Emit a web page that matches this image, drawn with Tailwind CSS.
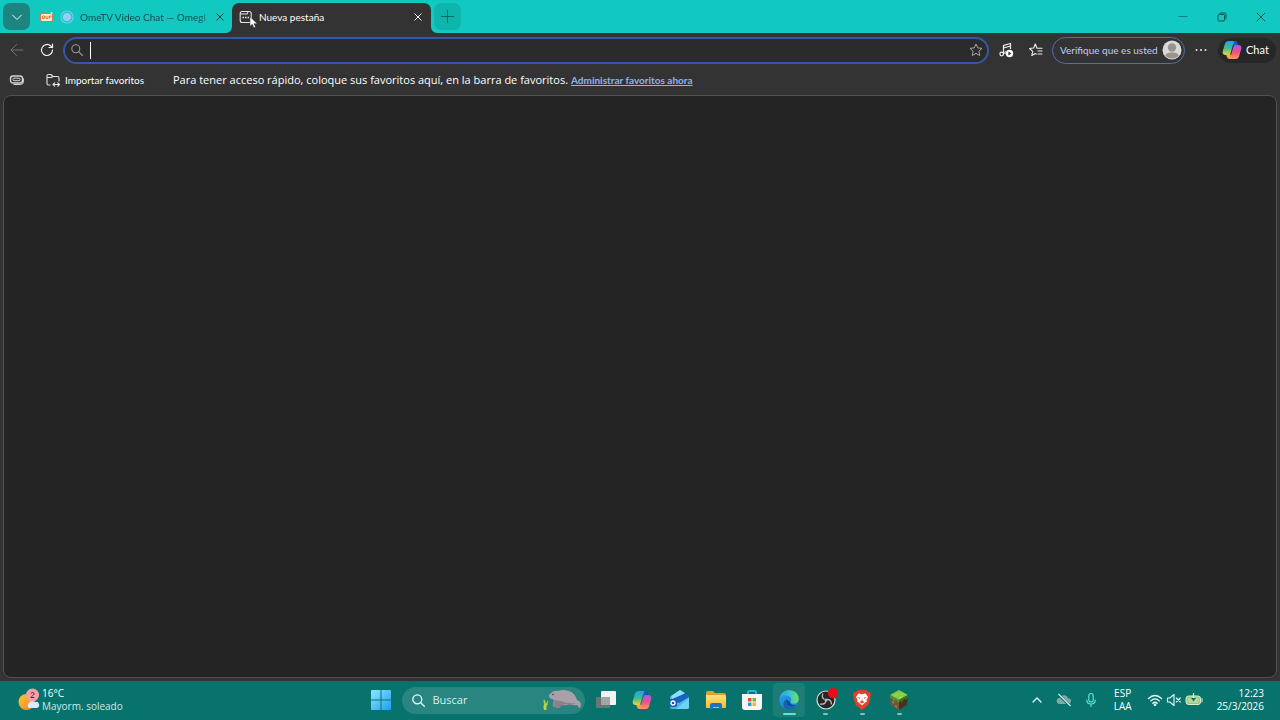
<!DOCTYPE html>
<html lang="es">
<head>
<meta charset="utf-8">
<meta name="viewport" content="width=device-width, initial-scale=1">
<title>Nueva pestaña</title>
<script src="https://cdn.jsdelivr.net/npm/@tailwindcss/browser@4"></script>
</head>
<body class="flex h-screen flex-col overflow-hidden bg-[#333333] font-['Open_Sans','Noto_Sans',sans-serif] text-[11px] text-white">
<svg class="absolute h-0 w-0" aria-hidden="true">
  <defs>
    <linearGradient id="cpA" x1="0" y1="0" x2="0" y2="1"><stop offset="0" stop-color="#2a9df0"/><stop offset=".5" stop-color="#3cbc8e"/><stop offset="1" stop-color="#f0d23c"/></linearGradient>
    <linearGradient id="cpB" x1="0" y1="0" x2="0" y2="1"><stop offset="0" stop-color="#a45be8"/><stop offset=".5" stop-color="#ef4f8c"/><stop offset="1" stop-color="#ff9a52"/></linearGradient>
    <linearGradient id="cpC" x1="0" y1="0" x2="1" y2="0"><stop offset="0" stop-color="#1f8df0"/><stop offset="1" stop-color="#1747b8"/></linearGradient>
    <linearGradient id="win" x1="0" y1="0" x2="1" y2="1"><stop offset="0" stop-color="#8de6ff"/><stop offset="1" stop-color="#1c9ff0"/></linearGradient>
    <linearGradient id="sun" x1="0" y1="0" x2="1" y2="1"><stop offset="0" stop-color="#ffc63a"/><stop offset="1" stop-color="#f0801e"/></linearGradient>
    <linearGradient id="edgeA" x1="0" y1="0" x2="1" y2="0"><stop offset="0" stop-color="#2ba3e0"/><stop offset=".5" stop-color="#36c2d6"/><stop offset="1" stop-color="#6be35c"/></linearGradient>
    <linearGradient id="edgeB" x1="0" y1="0" x2="1" y2="1"><stop offset="0" stop-color="#2ba0ea"/><stop offset="1" stop-color="#1675cc"/></linearGradient>
    <linearGradient id="fold" x1="0" y1="0" x2="0" y2="1"><stop offset="0" stop-color="#ffe07a"/><stop offset="1" stop-color="#f5bd32"/></linearGradient>
    <symbol id="copilot" viewBox="0 0 20 20">
      <path d="M7 1h6q2 0 2.600 2l.9 3h-4z" fill="url(#cpC)"/>
      <path d="M13 19H7.500q-2 0-2.600-2L4 14h4z" fill="#f2a544"/>
      <path d="M6.500 1H12L8.700 13q-.6 2-2.500 2H3Q0 14.500.8 11L3 3.500Q3.800 1 6.500 1z" fill="url(#cpA)"/>
      <path d="M13.800 5H17q3 .5 2.200 4L17 16.500q-.8 2.500-3.500 2.500H8l3.300-12q.6-2 2.500-2z" fill="url(#cpB)"/>
    </symbol>
  </defs>
</svg>

<header class="flex h-[33px] shrink-0 items-end bg-[#11c9c1] pl-[3px] font-['Lato','Open_Sans',sans-serif] text-[10px]">
  <button aria-label="Buscar pestañas" class="mb-[3px] grid h-[27px] w-[27px] place-items-center rounded-[7px] bg-[#1c8580]">
    <svg class="h-3 w-3" viewBox="0 0 12 12" fill="none" stroke="#e8ffff" stroke-linecap="round"><path d="M1.500 4 6 8.500 10.500 4"/></svg>
  </button>
  <div class="flex h-8 w-[202px] items-center pl-[9px] text-[#0b4a4a]">
    <svg class="h-4 w-4 shrink-0" viewBox="0 0 16 16"><path d="M1 4h3L5 2.500 6.500 4H14v9H1z" fill="#d9725c"/><rect x="2" y="5" width="11" height="7" rx="1" fill="#fbe9d2"/><path d="M3.500 7h2v2.500h-2zM7 7v2.500h2V7M10.500 9.500V7h1.500v1.500" fill="none" stroke="#d38058"/><circle cx="12.500" cy="4" r="1" fill="#fff"/></svg>
    <svg class="ml-1 h-4 w-4 shrink-0" viewBox="0 0 16 16"><circle cx="8" cy="8" r="6" fill="none" stroke="#6fc7f7" stroke-width="1.200"/><circle cx="8" cy="8" r="4.300" fill="#95ccf5"/></svg>
    <span class="ml-[5px] w-[132px] overflow-hidden mask-r-from-90% whitespace-nowrap">OmeTV Video Chat — Omegl</span>
    <button aria-label="Cerrar pestaña" class="grid h-4 w-4 shrink-0 place-items-center"><svg class="h-2 w-2" viewBox="0 0 8 8" stroke="#083c3c"><path d="M.5.5l7 7M7.500.5l-7 7"/></svg></button>
  </div>
  <div class="relative flex h-[30px] w-[199px] items-center rounded-t-[7px] bg-[#333333] pb-0.5 pl-[7px]">
    <svg class="absolute bottom-0 -left-1.5 h-1.5 w-1.5" viewBox="0 0 6 6"><path d="M6 0v6H0a6 6 0 0 0 6-6z" fill="#333333"/></svg>
    <svg class="absolute -right-1.5 bottom-0 h-1.5 w-1.5" viewBox="0 0 6 6"><path d="M0 0v6h6a6 6 0 0 1-6-6z" fill="#333333"/></svg>
    <svg class="h-3.5 w-3.5" viewBox="0 0 14 14" fill="none" stroke="#e6e6e6" stroke-width="1.100"><rect x="1.200" y="1.500" width="11" height="11" rx="2"/><path d="M1.500 4H8l1-2"/><path d="M3.500 7.500h7.500" stroke-width="1.500" stroke-dasharray="1.500 1"/></svg>
    <span class="ml-1.5 flex-1">Nueva pestaña</span>
    <button aria-label="Cerrar pestaña" class="mr-[5px] grid h-4 w-4 place-items-center"><svg class="h-2 w-2" viewBox="0 0 8 8" stroke="#f4f4f4"><path d="M.5.5l7 7M7.500.5l-7 7"/></svg></button>
    <svg class="absolute top-[13px] left-[17px] h-[13px] w-2.5" viewBox="0 0 10 13"><path d="M1 .8v9.500l2.300-2 1.600 3.500 1.700-.8L5 7.700h3.300z" fill="#fff" stroke="#333" stroke-width=".5"/></svg>
  </div>
  <button aria-label="Nueva pestaña" class="mb-[3px] ml-[3px] grid h-[27px] w-[27px] place-items-center rounded-[7px] bg-[#0eb5ad]">
    <svg class="h-[13px] w-[13px]" viewBox="0 0 13 13" stroke="#076661"><path d="M6.500 0v13M0 6.500h13"/></svg>
  </button>
  <div class="ml-auto flex h-[33px]">
    <button aria-label="Minimizar" class="grid w-[39px] place-items-center"><svg class="h-2.5 w-2.5" viewBox="0 0 10 10" stroke="#087d78"><path d="M.5 4.500h9"/></svg></button>
    <button aria-label="Restaurar" class="grid w-[39px] place-items-center"><svg class="h-2.5 w-2.5" viewBox="0 0 10 10" fill="none" stroke="#0b5350"><rect x="1" y="2.500" width="6.500" height="6.500" rx="1.200"/><path d="M3 2V1.500Q3 1 4 1h3.500Q9 1 9 2.500V6q0 1-1 1.300"/></svg></button>
    <button aria-label="Cerrar" class="grid w-[39px] place-items-center"><svg class="h-2.5 w-2.5" viewBox="0 0 10 10" stroke="#0b5350"><path d="M.8.8l8.400 8.400M9.200.8.8 9.200"/></svg></button>
  </div>
</header>

<nav class="flex h-[33px] shrink-0 items-center pt-px pr-1 pl-2 font-['Lato','Open_Sans',sans-serif]" aria-label="Barra de herramientas">
  <button aria-label="Atrás" class="grid h-[18px] w-[18px] place-items-center"><svg class="h-3.5 w-3.5" viewBox="0 0 14 14" fill="none" stroke="#707070" stroke-linecap="round"><path d="M13 7H1M6.500 1.500 1 7l5.500 5.500"/></svg></button>
  <button aria-label="Actualizar" class="ml-3 grid h-[18px] w-[18px] place-items-center"><svg class="h-3.5 w-3.5" viewBox="0 0 14 14" fill="none" stroke="#f2f2f2" stroke-width="1.200" stroke-linecap="round"><path d="M12.500 7A5.500 5.500 0 1 1 10.800 3L12.500 4.500"/><path d="M12.500 1v3.500H9"/></svg></button>
  <div class="ml-[7px] flex h-[27px] flex-1 items-center rounded-full border-2 border-[#3458a9] bg-[#2b2b2b] px-1.5">
    <svg class="h-3 w-3 shrink-0" viewBox="0 0 12 12" fill="none" stroke="#989898" stroke-width="1.100" stroke-linecap="round"><circle cx="4.800" cy="4.800" r="4"/><path d="M7.800 7.800l3.700 3.700"/></svg>
    <span class="ml-[7px] h-[17px] w-px shrink-0 bg-white" aria-hidden="true"></span>
    <input type="text" aria-label="Barra de direcciones y búsqueda" class="min-w-0 flex-1 bg-transparent px-1 outline-none">
    <button aria-label="Agregar a favoritos" class="-mr-0.5"><svg class="h-3.5 w-3.5" viewBox="0 0 14 14" fill="none" stroke="#a8a8a8" stroke-linejoin="round"><path d="M7 1l1.800 3.900 4.200.5-3.100 2.900.8 4.200L7 10.400l-3.700 2.100.8-4.200L1 5.400l4.200-.5z"/></svg></button>
  </div>
  <button aria-label="Música" class="ml-[9px]"><svg class="h-4 w-4" viewBox="0 0 16 16"><g fill="none" stroke="#eee" stroke-width="1.200"><path d="M5.500 12V3.500L12.500 1.500V7M5.500 6l7-2"/><circle cx="3.700" cy="12" r="1.800"/><path d="M7.700 9.500a1.500 1.500 0 0 0-.3 2.500"/></g><circle cx="11.500" cy="11.500" r="3.700" fill="#fff"/><path d="M10.400 9.600v3.800l3-1.900z" fill="#333"/></svg></button>
  <button aria-label="Favoritos" class="ml-3.5"><svg class="h-4 w-4" viewBox="0 0 16 16" fill="none" stroke="#eee" stroke-width="1.100" stroke-linejoin="round" stroke-linecap="round"><path d="M9 6.200 7.300 2 5.700 6 1.500 6.500 4.700 9.300 3.800 13.500l3.500-2 1 .6M9 6.200h5M10 9h4M10 12h4"/></svg></button>
  <button class="ml-2 flex h-[27px] w-[133px] items-center justify-between rounded-full border border-[#536eae] pr-0.5 pl-[7px] text-[10px] whitespace-nowrap text-[#c1cdf8]">Verifique que es usted
    <svg class="h-5 w-5 shrink-0" viewBox="0 0 20 20"><circle cx="10" cy="10" r="9.500" fill="#dad9d6"/><circle cx="10" cy="7.500" r="4.200" fill="#979490"/><path d="M3.500 16c0-3 3-3.500 6.500-3.500s6.500.5 6.500 3.500a9.500 9.500 0 0 1-13 0z" fill="#979490"/></svg>
  </button>
  <button aria-label="Configuración y más" class="ml-2.5"><svg class="h-3 w-3" viewBox="0 0 12 12" fill="#e6e6e6"><circle cx="1.500" cy="6" r="1"/><circle cx="6" cy="6" r="1"/><circle cx="10.500" cy="6" r="1"/></svg></button>
  <button class="ml-[11px] flex h-[25px] w-[58px] items-center gap-1 rounded-full bg-[#272727] pl-1"><svg class="h-5 w-5 shrink-0"><use href="#copilot"/></svg><span>Chat</span></button>
</nav>

<div class="flex h-[29px] shrink-0 items-center pb-px pl-[9px]">
  <button aria-label="Área de trabajo"><svg class="h-4 w-4" viewBox="0 0 16 16" fill="none" stroke="#d4d4d4"><rect x="1.500" y="4" width="12" height="7" rx="2.500" stroke-width="1.400"/><rect x="4" y="6.200" width="7" height="2.500" rx="1"/><path d="M14.500 6.500v3q0 3-3 3H4.500"/></svg></button>
  <button class="ml-5 flex w-[100px] items-center gap-1 font-['Lato','Open_Sans',sans-serif] text-[10px] whitespace-nowrap"><svg class="h-4 w-4 shrink-0" viewBox="0 0 16 16" fill="none" stroke="#e2e2e2" stroke-width="1.100" stroke-linecap="round" stroke-linejoin="round"><path d="M5 13H3.500Q2 13 2 11.500V4Q2 2.500 3.500 2.500H6L8 4.500H12.500Q14 4.500 14 6v3M2.500 5.500H6L8 4.500M8 12.500h6.500M9.700 10.800 8 12.500l1.700 1.700M12.800 10.800l1.700 1.700-1.700 1.700"/></svg>Importar favoritos</button>
  <p class="ml-7 whitespace-nowrap">Para tener acceso rápido, coloque sus favoritos aquí, en la barra de favoritos.</p>
  <a href="#" class="ml-[3px] font-['Lato','Open_Sans',sans-serif] text-[10px] font-bold whitespace-nowrap text-[#94b1ed] underline">Administrar favoritos ahora</a>
</div>

<main class="mx-[3px] mb-[3px] flex-1 rounded-lg border border-[#505050] bg-[#242424]"></main>

<footer class="grid h-[39px] shrink-0 grid-cols-[1fr_auto_1fr] items-center bg-[#08736c] pb-px text-[10px]">
  <button class="flex items-center gap-0.5 pl-[18px] text-left leading-[13px]">
    <svg class="h-6 w-[22px]" viewBox="0 0 22 24"><circle cx="8.500" cy="14" r="8" fill="url(#sun)"/><path d="M11 20a3 3 0 0 1 0-5 4 4 0 0 1 6-1 3 3 0 0 1 2 6z" fill="#d8e9fa"/><circle cx="14.500" cy="7" r="6.500" fill="#f3a0a8"/><path d="M12.800 5.500q1.500-2 3-.5c1 1.500-1.500 2.500-3 4.500h3.500" fill="none" stroke="#5d1f2c"/></svg>
    <span><span class="block">16°C</span><span class="block text-[#cdeae7]">Mayorm. soleado</span></span>
  </button>
  <div class="flex items-center gap-[3px]">
    <button aria-label="Inicio" class="grid h-9 w-9 place-items-center"><svg class="h-5 w-5" viewBox="0 0 20 20" fill="url(#win)"><path d="M0 1q0-1 1-1h8.500v9.500H0zM10.500 0H19q1 0 1 1v8.500h-9.500zM0 10.500h9.500V20H1q-1 0-1-1zM10.500 10.500H20V19q0 1-1 1h-8.500z"/></svg></button>
    <label class="flex h-[27px] w-[183px] items-center rounded-full bg-[#298580] pr-1 pl-2.5">
      <svg class="h-[13px] w-[13px] shrink-0" viewBox="0 0 13 13" fill="none" stroke="#e4ffff" stroke-width="1.300" stroke-linecap="round"><circle cx="5.300" cy="5.300" r="4.500"/><path d="M8.700 8.700l3.600 3.600"/></svg>
      <input type="text" placeholder="Buscar" aria-label="Buscar" class="ml-2 w-0 min-w-0 flex-1 bg-transparent text-[11px] outline-none placeholder:text-[#d9efed]">
      <svg class="h-[22px] w-[38px] shrink-0" viewBox="0 0 38 22"><path d="M8 4Q11 1 15 2q5-2 11 0 6 2 8 9 3 1 4 4 0 3-2 4-1-2-2-3-4 1-7-1-5 2-9 1l-1 2q-3 2-4 0l-2 0q-2-1-1-3l1-4Q5 9 6 6z" fill="#aaa0a9"/><path d="M6 7q1 4 5 4l7 1q7 3 16 2-6 3-11 1-3 1-5 1l-1 2q-3 2-4 0-3 1-3-2l2-5Q6 10 6 7z" fill="#8b808e"/><circle cx="10" cy="5.500" r=".8" fill="#3c3540"/><path d="M1 21q-1-4 0-6-1-3 0-5 2 3 1.500 5Q4 14 4.500 11q1 4-1 6v4z" fill="#b2d940"/></svg>
    </label>
    <div class="grid w-[330px] grid-cols-9 place-items-center">
      <button aria-label="Vista de tareas" class="grid h-9 w-full place-items-center"><svg class="h-[22px] w-[22px]" viewBox="0 0 22 22"><rect x="6" y="2" width="15" height="14" rx="1" fill="#f2f2f2"/><rect x="1" y="8" width="14" height="11" rx="1" fill="#6b7573"/><rect x="6" y="8" width="9" height="8" fill="#a5a5a5"/></svg></button>
      <button aria-label="Copilot" class="grid h-9 w-full place-items-center"><svg class="h-5 w-5"><use href="#copilot"/></svg></button>
      <button aria-label="Outlook" class="grid h-9 w-full place-items-center"><svg class="h-[22px] w-[22px]" viewBox="0 0 22 22"><path d="M2 8 12 1l9 7v10q0 2-2 2H4q-2 0-2-2z" fill="#48b7ee"/><path d="M3 7l9-6 5 3L5 12z" fill="#8bddfa"/><path d="M2 11 18 4l3 4-10 6z" fill="#1763bd"/><path d="M8 20l13-11v9q0 2-2 2z" fill="#69d3f8"/><rect x="1" y="10" width="8" height="8" rx="2" fill="#1260b8"/><circle cx="5" cy="14" r="2" fill="none" stroke="#fff" stroke-width="1.300"/></svg></button>
      <button aria-label="Explorador de archivos" class="grid h-9 w-full place-items-center"><svg class="h-[22px] w-[22px]" viewBox="0 0 22 22"><path d="M1 4q0-2 2-2h5l2 2h9q2 0 2 2v4H1z" fill="#dfa126"/><path d="M1 6h18q2 0 2 2v10q0 1-1 1H1z" fill="url(#fold)"/><path d="M5 20v-4q0-2 2-2h8q2 0 2 2v4h-3v-2H8v2z" fill="#1976be"/></svg></button>
      <button aria-label="Microsoft Store" class="grid h-9 w-full place-items-center"><svg class="h-[22px] w-[22px]" viewBox="0 0 22 22"><path d="M7 6V3q0-1 1-1h6q1 0 1 1v3" fill="none" stroke="#45c4f4" stroke-width="1.500"/><path d="M1 5h20v13q0 3-3 3H4q-3 0-3-3z" fill="#f6f6f6"/><path d="M7 9h3.500v3.500H7z" fill="#ea4d2c"/><path d="M11.500 9H15v3.500h-3.500z" fill="#76b82a"/><path d="M7 13.500h3.500V17H7z" fill="#249ad7"/><path d="M11.500 13.500H15V17h-3.500z" fill="#f6b71b"/></svg></button>
      <button aria-label="Microsoft Edge" class="relative grid h-[34px] w-8 place-items-center rounded bg-[#1b7d76]"><svg class="h-5 w-5" viewBox="0 0 20 20"><circle cx="10" cy="10" r="9.700" fill="url(#edgeB)"/><path d="M.3 9.500C1 3.800 5 .3 10 .3c6 0 9.700 4 9.700 8.500 0 3-2 5-5 5-2.200 0-3.500-.8-3.500-1.500s1-1 1-2.800C12.200 7 9.500 5.500 6.800 5.500 3.500 5.500 1 7.500.3 9.500z" fill="url(#edgeA)"/><path d="M7.500 9.200c-1.500 3.500.5 8 5.500 8 2.500 0 4.200-1.200 5-2-2 4-8 5.500-12 3C3.500 16 4 11 7.500 9.200z" fill="#1464b4"/><path d="M7.500 9.200Q6 14 10.500 16q4 1.500 8-1.500-2 1.500-5 .5-3-1-2.300-3Q9 11 7.500 9.200z" fill="#0b4a91"/></svg><span class="absolute bottom-0.5 h-0.5 w-[13px] rounded-full bg-[#5de4df]"></span></button>
      <button aria-label="OBS Studio" class="relative grid h-[34px] w-full place-items-center"><svg class="h-[26px] w-[26px]" viewBox="0 0 26 26"><circle cx="13" cy="13" r="9" fill="#262527" stroke="#dcdcdc" stroke-width="1.200"/><g fill="none" stroke="#b9b9b9" stroke-width="1.300"><path d="M10 6.500q-2 4 1.500 6"/><path d="M7 17q5 1 6-3"/><path d="M18.500 17.500q0-5-4.500-5"/></g><circle cx="13" cy="13" r="1.500" fill="#b9b9b9"/><circle cx="20" cy="6" r="5.200" fill="#e51016"/></svg><span class="absolute bottom-0.5 h-0.5 w-[5px] rounded-full bg-[#8ebdb9]"></span></button>
      <button aria-label="Brave" class="relative grid h-[34px] w-full place-items-center"><svg class="h-5 w-5" viewBox="0 0 20 20"><path d="M6 0h8l2 2h2l1 3-.8 2 .3 1-2.200 7-6.300 5-6.300-5L1.500 8l.3-1L1 5l1-3h2z" fill="#e63e29"/><path d="M6.500 3.500l3.500.8 3.500-.8L16 7l-1.500 3 .3 1.500-2.800 2-2 2-2-2-2.800-2 .3-1.500L4 7z" fill="#fff"/><path d="M5.500 7l3 .8-1 1zM14.500 7l-3 .8 1 1zM10 8l.5 3 2 1-2.500 1.500L7.500 12l2-1z" fill="#e63e29"/></svg><span class="absolute bottom-0.5 h-0.5 w-[5px] rounded-full bg-[#8ebdb9]"></span></button>
      <button aria-label="Minecraft" class="relative grid h-[34px] w-full place-items-center"><svg class="h-5 w-5" viewBox="0 0 20 20"><path d="M1 5l9-5 9 5-9 6z" fill="#86cc46"/><path d="M1 5l9 5v10l-8-5z" fill="#76533a"/><path d="M19 5l-9 5v10l8-5z" fill="#48311f"/><path d="M1 5l9 5v3l-2-1v-1l-2-1v2l-2-1v-2l-3-1z" fill="#568f2a"/><path d="M19 5l-9 5v2l2-1v2l2-2v-1l2-1v1l3-2z" fill="#3f701f"/><path d="M5 5l3-1 2 1-3 1zM11 4l2-1 2 1-2 1zM9 7l3-1 2 1-3 1z" fill="#9bd65a"/><path d="M3 11l2 1v2l-2-1zM6 15l2 1v2l-2-1z" fill="#9a7458"/></svg><span class="absolute bottom-0.5 h-0.5 w-[5px] rounded-full bg-[#8ebdb9]"></span></button>
    </div>
  </div>
  <div class="flex items-center justify-end pr-4 leading-[13px]">
    <button aria-label="Mostrar iconos ocultos"><svg class="h-2.5 w-2.5" viewBox="0 0 10 10" fill="none" stroke="#e4ffff" stroke-width="1.300" stroke-linecap="round"><path d="M1 7l4-4 4 4"/></svg></button>
    <button aria-label="OneDrive" class="ml-3.5"><svg class="h-4 w-4" viewBox="0 0 16 16"><path d="M4 12a3 3 0 0 1-.5-6Q5 3 8 3.300q3 0 4 3Q15 6.500 15 9t-3 3z" fill="#81a9a7"/><path d="M2 2l12 12" stroke="#08736c" stroke-width="2.500"/><path d="M2.500 2l12 12" stroke="#d9efef" stroke-width="1.100"/></svg></button>
    <button aria-label="Micrófono" class="ml-[11px]"><svg class="h-4 w-4" viewBox="0 0 16 16" fill="none" stroke="#5ae0d4" stroke-width="1.200" stroke-linecap="round"><rect x="5.800" y="1.500" width="4.400" height="8.500" rx="2.200"/><path d="M3.800 8q0 4 4.200 4t4.200-4M8 12v2.500"/></svg></button>
    <button class="ml-3.5 w-5 text-center">ESP<br>LAA</button>
    <button class="ml-3.5 flex items-center gap-[3px]" aria-label="Red, volumen y batería">
      <svg class="h-4 w-4" viewBox="0 0 16 16" fill="none" stroke="#e4ffff" stroke-width="1.300" stroke-linecap="round"><path d="M1.500 6.500q6.500-6 13 0M3.700 8.900q4.300-4 8.600 0M5.800 11.200q2.200-2 4.400 0"/><circle cx="8" cy="12.800" r=".7" fill="#e4ffff"/></svg>
      <svg class="h-4 w-4" viewBox="0 0 16 16" fill="none" stroke="#e4ffff" stroke-width="1.100" stroke-linecap="round" stroke-linejoin="round"><path d="M1.500 6h2.300L8 2.500v11L3.800 10H1.500zM10.300 6l4 4M14.300 6l-4 4"/></svg>
      <svg class="h-4 w-[18px]" viewBox="0 0 18 16"><rect x="1" y="4" width="14.500" height="8.500" rx="2.500" fill="#8fc48c" stroke="#d7f2c8"/><rect x="2.500" y="5.500" width="11.500" height="5.500" rx="1.200" fill="#afd99c"/><path d="M17 6.500v3.500" stroke="#d7f2c8" stroke-linecap="round"/><path d="M8.500 1v6" stroke="#e3ffd9" stroke-width="1.200"/><path d="M6 6h5L8.500 9.500z" fill="#1c6f55"/></svg>
    </button>
    <button class="ml-3.5 text-right">12:23<br>25/3/2026</button>
  </div>
</footer>
</body>
</html>
